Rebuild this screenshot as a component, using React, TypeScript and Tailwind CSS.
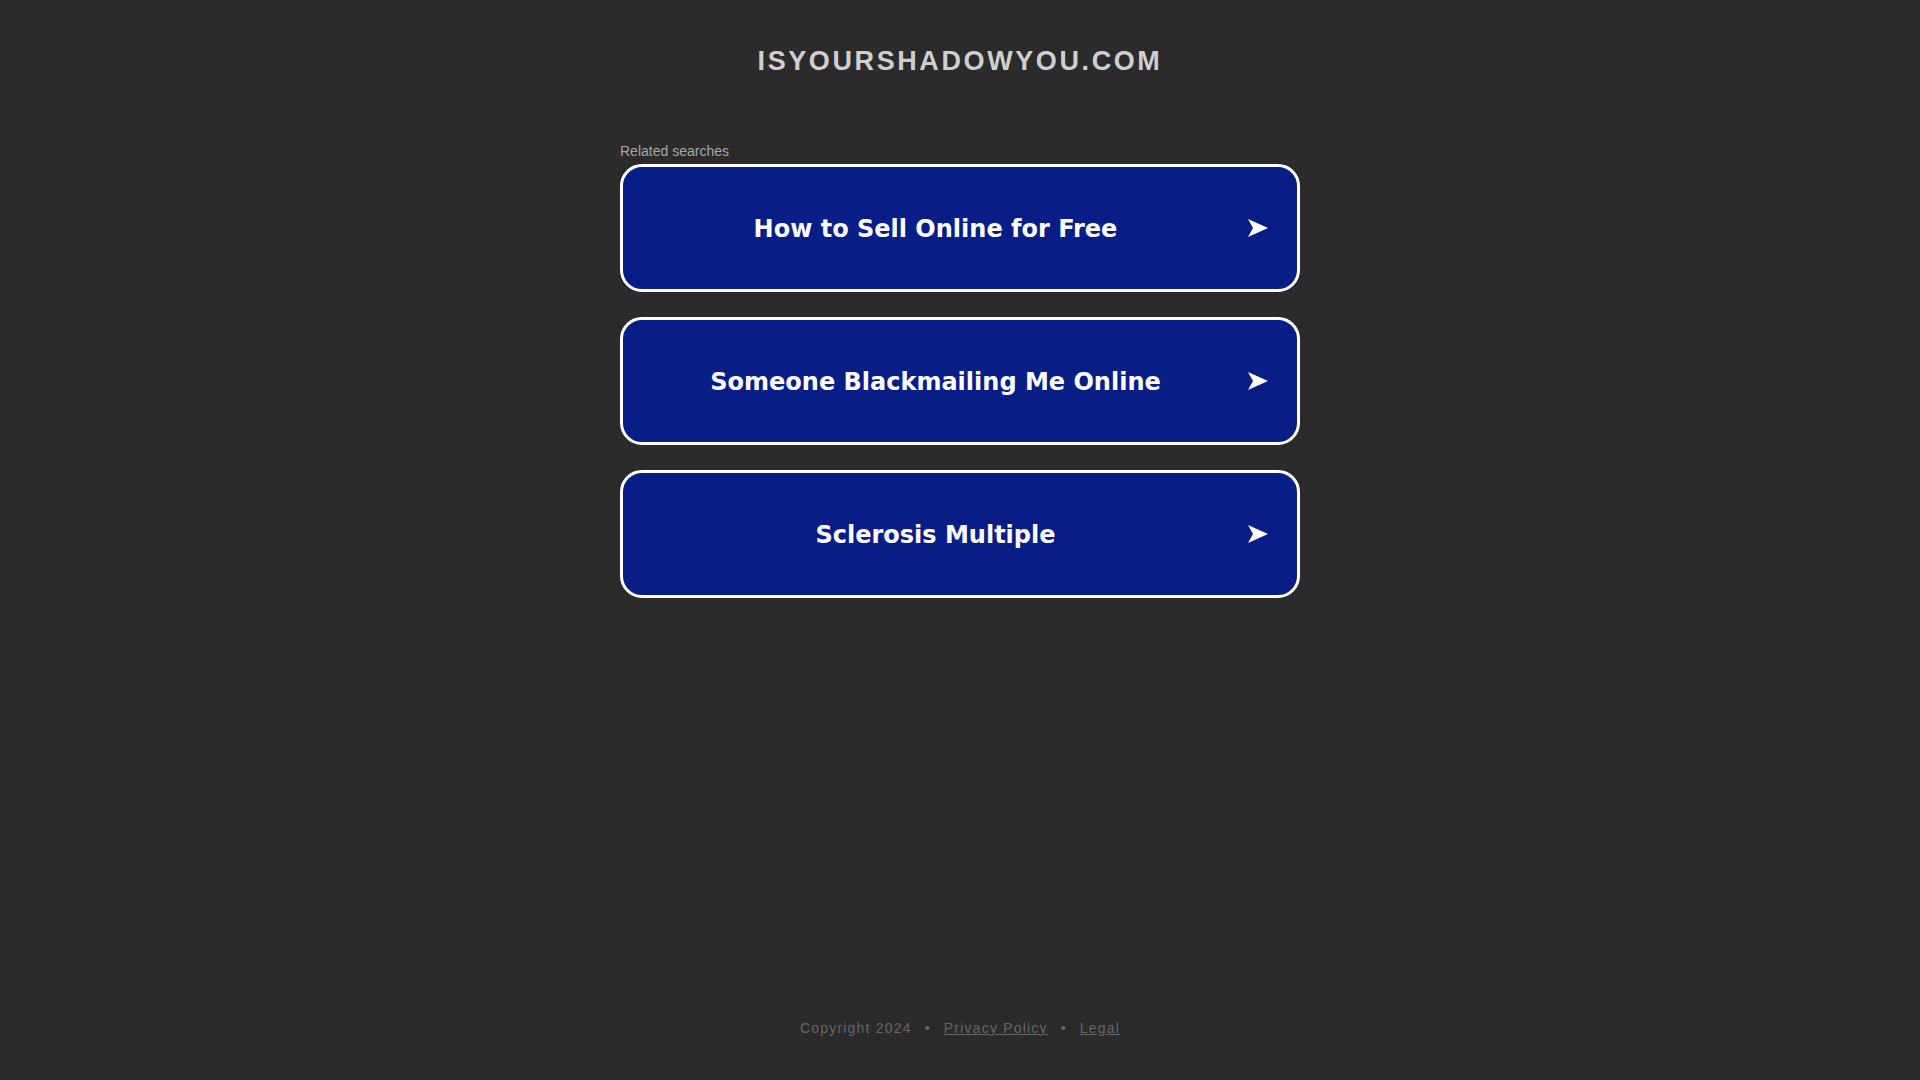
import React from "react";

const searches = [
  "How to Sell Online for Free",
  "Someone Blackmailing Me Online",
  "Sclerosis Multiple",
];

const Arrow = () => (
  <svg width="20" height="18" viewBox="0 0 20 18" className="shrink-0">
    <path d="M0 0 L20 9 L0 18 L5 9 Z" fill="#ffffff" />
  </svg>
);

const App = () => {
  return (
    <div className="min-h-screen w-full bg-[#2b2b2b] flex flex-col items-center font-['Liberation_Sans',Arial,sans-serif]">
      <div className="pt-[43px] h-[141px]">
        <h1 className="text-[27px] leading-[36px] font-bold tracking-[2.6px] text-[#cfcfcf]">
          ISYOURSHADOWYOU.COM
        </h1>
      </div>

      <div className="w-[680px]">
        <div className="text-[14px] leading-[18px] text-[#a8a8a8] pt-[1px] mb-[4px]">
          Related searches
        </div>
        <div className="flex flex-col gap-[25px]">
          {searches.map((s) => (
            <a
              key={s}
              href="#"
              className="flex items-center h-[128px] rounded-[22px] border-[3px] border-white bg-[#081d85]"
            >
              <span className="flex-1 text-center text-white font-bold text-[24px] pt-[2px] font-['DejaVu_Sans',Verdana,sans-serif]">
                {s}
              </span>
              <span className="mr-[29px]">
                <Arrow />
              </span>
            </a>
          ))}
        </div>
      </div>

      <div className="flex-1" />

      <div className="pb-[41px] flex items-center gap-[13px] text-[14px] tracking-[1.2px] text-[#666666]">
        <span>Copyright 2024</span>
        <span>•</span>
        <a href="#" className="underline">Privacy Policy</a>
        <span>•</span>
        <a href="#" className="underline">Legal</a>
      </div>
    </div>
  );
};

export default App;
